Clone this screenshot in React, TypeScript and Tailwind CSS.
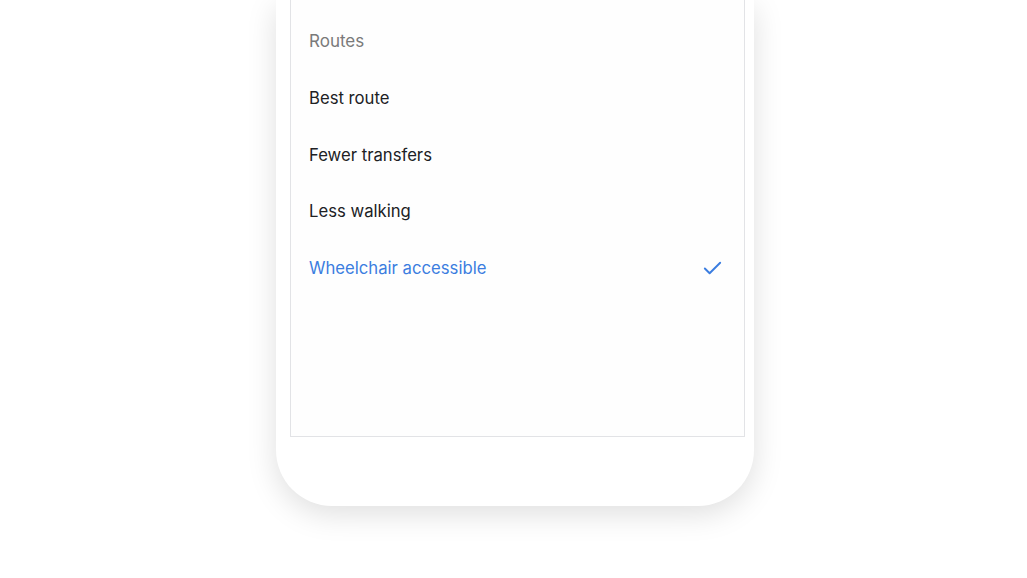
import { Check } from "lucide-react";

const options = [
  { label: "Best route", active: false },
  { label: "Fewer transfers", active: false },
  { label: "Less walking", active: false },
  { label: "Wheelchair accessible", active: true },
];

export default function App() {
  return (
    <div
      className="h-[578px] w-full overflow-hidden bg-white flex justify-center"
      style={{ fontFamily: "Inter, Roboto, 'Liberation Sans', sans-serif" }}
    >
      <div className="ml-[3px] w-[478px] h-[506px] pl-[14px] pr-[9px] pb-[69px] bg-white rounded-b-[56px] shadow-[0_8px_30px_rgba(0,0,0,0.13)]">
        {/* Screen */}
        <div className="h-full border-x border-b border-[#e2e3e6] bg-[#fefefe] pl-[18px] pr-[20px]">
          <div className="h-[83px] flex items-center text-[17px] text-[#7a7a7a]">Routes</div>
          {options.map((o) => (
            <div
              key={o.label}
              className={`h-[56.7px] flex items-center justify-between text-[16.7px] ${
                o.active ? "text-[#3b7de0]" : "text-[#202124]"
              }`}
            >
              <span className="-mt-[26px]">{o.label}</span>
              {o.active && <Check className="-mt-[26px]" size={23} strokeWidth={2} />}
            </div>
          ))}
        </div>
      </div>
    </div>
  );
}
